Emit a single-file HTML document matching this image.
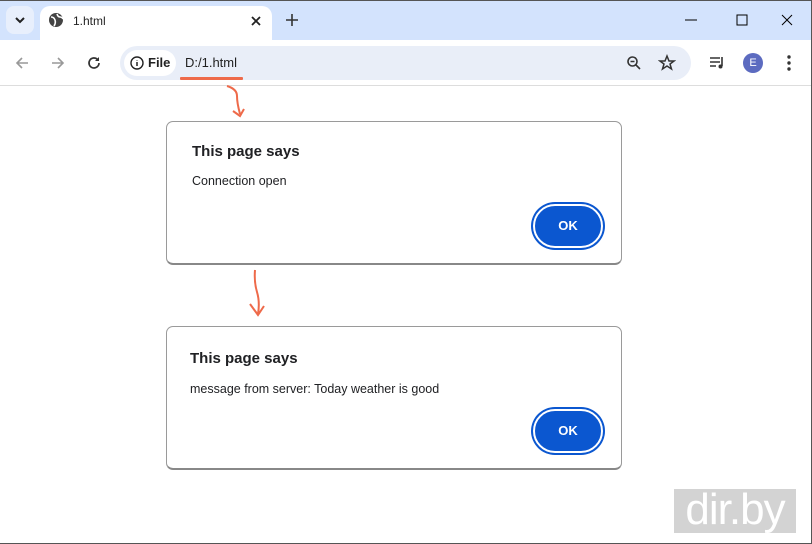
<!DOCTYPE html>
<html><head><style>
*{margin:0;padding:0;box-sizing:border-box}
body{width:812px;height:544px;overflow:hidden;background:#fff;font-family:"Liberation Sans",Arial,sans-serif;position:relative}
.frame{position:absolute;left:0;top:0;width:812px;height:544px;border:1px solid #555;border-left:none;pointer-events:none}
.tabbar{position:absolute;left:0;top:0;width:812px;height:40px;background:#d3e3fd}
.tabdd{position:absolute;left:6px;top:6px;width:28px;height:28px;border-radius:8px;background:#e8effc}
.tab{position:absolute;left:40px;top:6px;width:232px;height:34px;background:#fff;border-radius:10px 10px 0 0}
.toolbar{position:absolute;left:0;top:40px;width:812px;height:46px;background:#fff;border-bottom:1px solid #ddd}
.omni{position:absolute;left:120px;top:6px;width:571px;height:34px;border-radius:17px;background:#e9eef8}
.chip{position:absolute;left:4px;top:4px;width:52px;height:26px;border-radius:13px;background:#fff;font-size:13px;font-weight:bold;color:#222}
.dlg{position:absolute;left:166px;width:456px;height:144px;border:1px solid #9a9a9a;border-bottom:2px solid #888;border-radius:7px;background:#fff}
.dlg h1{position:absolute;left:25px;font-size:15px;font-weight:bold;color:#202124}
.dlg p{position:absolute;font-size:12.5px;color:#202124}
.ok{position:absolute;right:18px;bottom:15px;width:70px;height:44px;border-radius:22px;background:#0b57d0;border:2px solid #fff;box-shadow:0 0 0 2px #0b57d0;color:#fff;font-weight:bold;font-size:13px;text-align:center;line-height:40px}
.wm{position:absolute;left:674px;top:489px;width:122px;height:44px;background:#d3d3d3;color:#fff;font-size:44px;line-height:42px;text-align:center;letter-spacing:-1px}
</style></head><body>
<div class="tabbar">
 <div class="tabdd"><svg width="28" height="28"><path d="M10 12l4 4 4-4" stroke="#222" stroke-width="2" fill="none"/></svg></div>
 <div class="tab">
  <svg style="position:absolute;left:8px;top:6px" width="16" height="16"><circle cx="8" cy="8" r="7" fill="#444"/><path d="M3 5q3 0 4 3t-1 6M9 2q1 3 3 3t3 2" stroke="#fff" stroke-width="1.6" fill="none"/></svg>
  <span style="position:absolute;left:33px;top:8px;font-size:12px;color:#222">1.html</span>
  <svg style="position:absolute;left:209px;top:8px" width="14" height="14"><path d="M3 3l8 8M11 3l-8 8" stroke="#222" stroke-width="1.8"/></svg>
 </div>
 <svg style="position:absolute;left:284px;top:12px" width="16" height="16"><path d="M8 2v12M2 8h12" stroke="#333" stroke-width="1.6"/></svg>
 <svg style="position:absolute;left:684px;top:14px" width="14" height="12"><path d="M1 6h12" stroke="#000"/></svg>
 <svg style="position:absolute;left:736px;top:14px" width="12" height="12"><rect x="1" y="1" width="10" height="10" stroke="#000" fill="none"/></svg>
 <svg style="position:absolute;left:781px;top:14px" width="12" height="12"><path d="M1 1l10 10M11 1l-10 10" stroke="#000"/></svg>
</div>
<div class="toolbar">
 <svg style="position:absolute;left:14px;top:15px" width="16" height="16"><path d="M14 8H3M8 3L3 8l5 5" stroke="#999" stroke-width="1.6" fill="none"/></svg>
 <svg style="position:absolute;left:50px;top:15px" width="16" height="16"><path d="M2 8h11M8 3l5 5-5 5" stroke="#999" stroke-width="1.6" fill="none"/></svg>
 <svg style="position:absolute;left:86px;top:15px" width="16" height="16"><path d="M13 8a5 5 0 1 1-1.5-3.6" stroke="#333" stroke-width="1.7" fill="none"/><path d="M13 2v4h-4" fill="#333"/></svg>
 <div class="omni">
  <div class="chip"><svg style="position:absolute;left:6px;top:6px" width="14" height="14"><circle cx="7" cy="7" r="6" stroke="#222" stroke-width="1.4" fill="none"/><path d="M7 6v4M7 4v.5" stroke="#222" stroke-width="1.5"/></svg><span style="position:absolute;left:24px;top:5px">File</span></div>
  <span style="position:absolute;left:65px;top:9px;font-size:13px;color:#1f1f1f">D:/1.html</span>
  <svg style="position:absolute;left:506px;top:9px" width="16" height="16"><circle cx="6.5" cy="6.5" r="4.5" stroke="#333" stroke-width="1.6" fill="none"/><path d="M4.5 6.5h4M10 10l4 4" stroke="#333" stroke-width="1.6"/></svg>
  <svg style="position:absolute;left:538px;top:8px" width="18" height="18"><path d="M9 2l2 5h5l-4 3 1.5 5L9 12l-4.5 3L6 10 2 7h5z" stroke="#333" stroke-width="1.5" fill="none"/></svg>
 </div>
 <svg style="position:absolute;left:709px;top:15px" width="18" height="16"><path d="M1 3h10M1 7h10M1 11h6M13 2v9" stroke="#333" stroke-width="1.6"/><circle cx="11.5" cy="11.5" r="2" fill="#333"/></svg>
 <div style="position:absolute;left:743px;top:13px;width:20px;height:20px;border-radius:50%;background:#5c6bc0;color:#fff;font-size:11px;text-align:center;line-height:20px">E</div>
 <svg style="position:absolute;left:786px;top:14px" width="6" height="18"><circle cx="3" cy="3" r="1.7" fill="#333"/><circle cx="3" cy="9" r="1.7" fill="#333"/><circle cx="3" cy="15" r="1.7" fill="#333"/></svg>
</div>
<div style="position:absolute;left:180px;top:77px;width:63px;height:3px;background:#ee6a4a;border-radius:1px"></div>
<svg style="position:absolute;left:0;top:0" width="812" height="544"><path d="M227 86q10 3 10 10t3 18M233 111l7 5 4-7M255 270q-1 12 2 22t1 22M250 304l8 11 6-9" stroke="#ee6a4a" stroke-width="2" fill="none"/></svg>
<div class="dlg" style="top:121px"><h1 style="top:21px">This page says</h1><p style="left:25px;top:52px">Connection open</p><div class="ok">OK</div></div>
<div class="dlg" style="top:326px"><h1 style="left:23px;top:23px">This page says</h1><p style="left:23px;top:55px">message from server: Today weather is good</p><div class="ok">OK</div></div>
<div class="wm">dir.by</div>
<div class="frame"></div>
</body></html>
